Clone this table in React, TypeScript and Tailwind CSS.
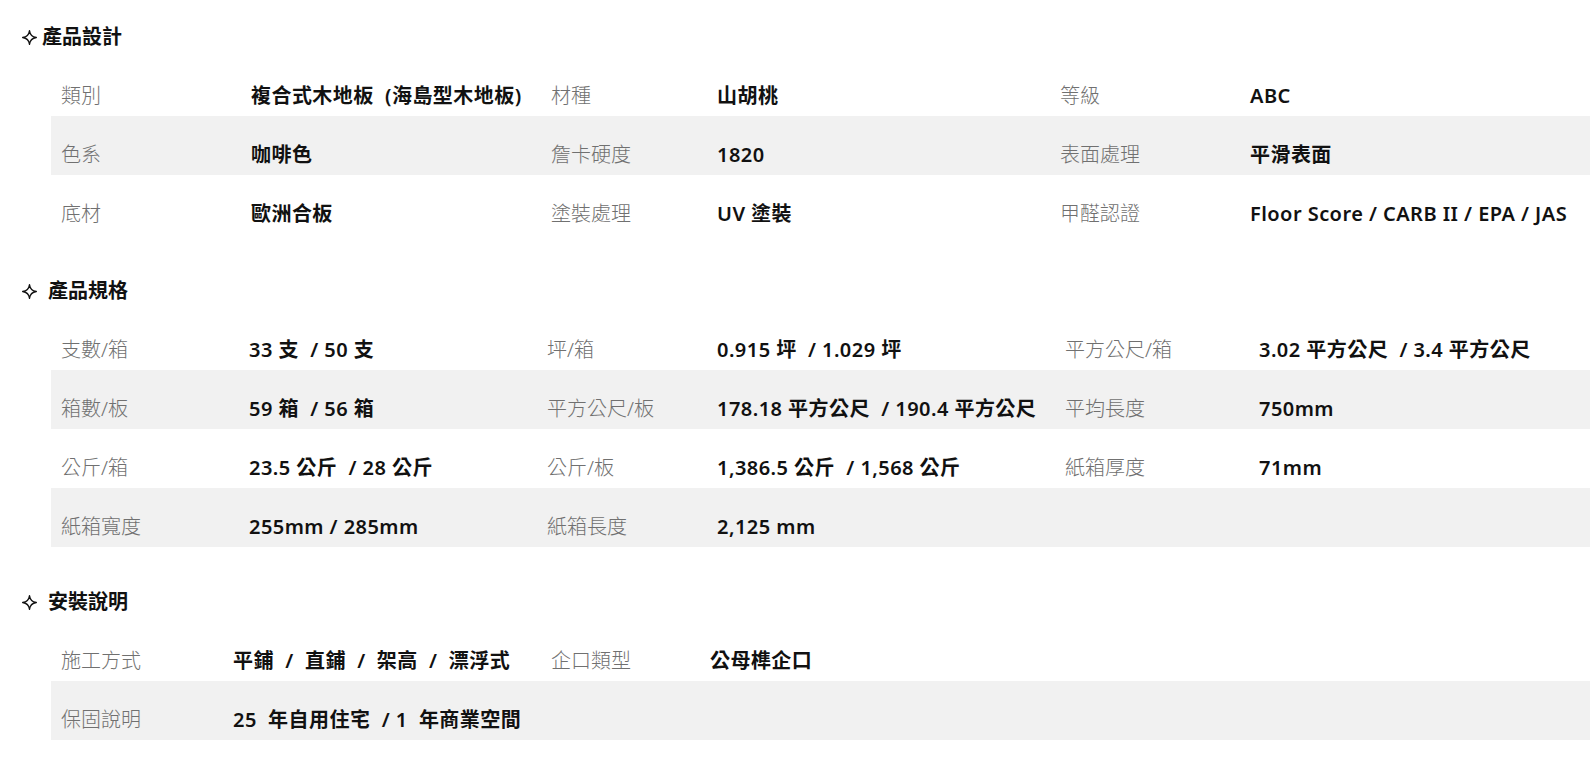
import React from "react";

type Row = [string, string, string?, string?, string?, string?];

const sections: { title: string; gap: string; cols: string; rows: Row[] }[] = [
  {
    title: "產品設計",
    gap: "gap-[5px]",
    cols: "grid-cols-[190px_300px_166px_343px_190px_1fr]",
    rows: [
      ["類別", "複合式木地板\u00a0 (海島型木地板)", "材種", "山胡桃", "等級", "ABC"],
      ["色系", "咖啡色", "詹卡硬度", "1820", "表面處理", "平滑表面"],
      ["底材", "歐洲合板", "塗裝處理", "UV 塗裝", "甲醛認證", "Floor Score / CARB II / EPA / JAS"],
    ],
  },
  {
    title: "產品規格",
    gap: "gap-[11px]",
    cols: "grid-cols-[188px_298px_170px_348px_194px_1fr]",
    rows: [
      ["支數/箱", "33 支\u00a0 / 50 支", "坪/箱", "0.915 坪\u00a0 / 1.029 坪", "平方公尺/箱", "3.02 平方公尺\u00a0 / 3.4 平方公尺"],
      ["箱數/板", "59 箱\u00a0 / 56 箱", "平方公尺/板", "178.18 平方公尺\u00a0 / 190.4 平方公尺", "平均長度", "750mm"],
      ["公斤/箱", "23.5 公斤\u00a0 / 28 公斤", "公斤/板", "1,386.5 公斤\u00a0 / 1,568 公斤", "紙箱厚度", "71mm"],
      ["紙箱寬度", "255mm / 285mm", "紙箱長度", "2,125 mm", "", ""],
    ],
  },
  {
    title: "安裝說明",
    gap: "gap-[11px]",
    cols: "grid-cols-[172px_318px_159px_1fr]",
    rows: [
      ["施工方式", "平鋪\u00a0 /\u00a0 直鋪\u00a0 /\u00a0 架高\u00a0 /\u00a0 漂浮式", "企口類型", "公母榫企口"],
      ["保固說明", "25\u00a0 年自用住宅\u00a0 / 1\u00a0 年商業空間"],
    ],
  },
];

function Star() {
  return (
    <svg width="15" height="15" viewBox="0 0 14 14" className="shrink-0">
      <path
        d="M7 0.6 Q7.7 6.3 13.4 7 Q7.7 7.7 7 13.4 Q6.3 7.7 0.6 7 Q6.3 6.3 7 0.6 Z"
        fill="none"
        stroke="#111"
        strokeWidth="1.2"
        strokeLinejoin="round"
      />
    </svg>
  );
}

export default function App() {
  return (
    <div className="min-h-screen bg-white pt-[23px] pb-8 font-['Noto_Sans','Noto_Sans_CJK_TC',sans-serif] text-[20px]">
      {sections.map((s, si) => (
        <section key={s.title} className={si === 0 ? "" : si === 1 ? "mt-[43px]" : "mt-[41px]"}>
          <h2 className={`flex items-center ${s.gap} pl-[22px] h-[28px] mb-[6px] text-[20px] font-bold text-[#111] leading-[28px]`}>
            <Star />
            <span>{s.title}</span>
          </h2>
          <div className="ml-[51px] mr-[3px]">
            {s.rows.map((r, ri) => (
              <div key={ri} className={`grid ${s.cols} h-[59px] ${ri % 2 === 1 ? "bg-[#f1f1f1]" : ""}`}>
                {r.map((c, ci) => (
                  <div
                    key={ci}
                    className={`pl-[10px] pt-[25px] leading-[28px] whitespace-nowrap ${
                      ci % 2 === 0
                        ? "text-[#707070] font-light"
                        : "text-[#111] font-semibold tracking-[0.45px]"
                    }`}
                  >
                    {c}
                  </div>
                ))}
              </div>
            ))}
          </div>
        </section>
      ))}
    </div>
  );
}
